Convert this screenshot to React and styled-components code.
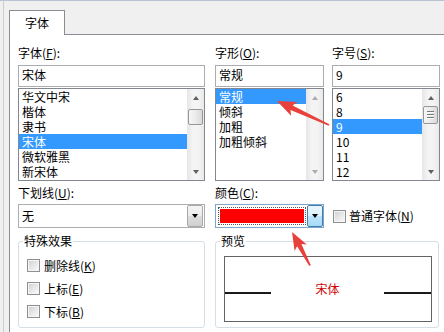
import React from 'react';
import styled, { createGlobalStyle } from 'styled-components';

const Global = createGlobalStyle`
  html, body { margin: 0; padding: 0; background: #f0f0f0; }
  body {
    font-family: "Noto Sans CJK SC", "Noto Sans", sans-serif;
    font-size: 12px;
    color: #000;
  }
  #root { width: 444px; height: 332px; overflow: hidden; }
`;

const Window = styled.div`
  position: relative;
  width: 444px;
  height: 332px;
  overflow: hidden;
  background: #f0f0f0;
  box-shadow: inset 0 1px 0 #b6c4d6;
  display: flex;
`;

const FrameEdge = styled.div`
  flex: none;
  width: 3px;
  border-right: 1px solid #cdcdcd;
`;

const Main = styled.div`
  flex: 1;
  min-width: 0;
  display: flex;
  flex-direction: column;
  padding: 10px 0 0 5px;
`;

const TabStrip = styled.div`
  height: 24px;
  flex: none;
  display: flex;
  align-items: flex-start;
`;

const Tab = styled.div`
  position: relative;
  z-index: 1;
  width: 56px;
  height: 25px;
  box-sizing: border-box;
  border: 1px solid #898c95;
  border-bottom: none;
  background: #fff;
  display: flex;
  align-items: center;
  justify-content: center;
  line-height: 16px;
`;

const Panel = styled.div`
  flex: 1;
  background: #fff;
  border-top: 1px solid #898c95;
  border-left: 1px solid #898c95;
  padding: 10px 0 0 8px;
  overflow: hidden;
`;

const Grid = styled.div`
  display: grid;
  grid-template-columns: 187px 10px 109px 8px 108px;
  row-gap: 4px;
  align-items: start;
`;

const Field = styled.div`
  grid-column: ${p => p.$col};
  display: flex;
  flex-direction: column;
  min-width: 0;
`;

const Label = styled.div`
  line-height: 16px;
  height: 16px;
  white-space: nowrap;
  margin-bottom: ${p => p.$gap}px;
`;

const TextBox = styled.div`
  height: 22px;
  box-sizing: border-box;
  border: 1px solid #abadb3;
  padding: 0 3px;
  line-height: 18px;
  background: #fff;
  margin-bottom: 1px;
`;

const ListFrame = styled.div`
  height: 93px;
  box-sizing: border-box;
  border: 1px solid #828790;
  display: flex;
  background: #fff;
`;

const ListItems = styled.div`
  flex: 1;
  min-width: 0;
  overflow: hidden;
`;

const ListItem = styled.div`
  height: 15px;
  line-height: 15px;
  padding-left: 3px;
  white-space: nowrap;
  background: ${p => (p.$selected ? '#3399ff' : 'transparent')};
  color: ${p => (p.$selected ? '#fff' : '#000')};
`;

const ScrollBar = styled.div`
  width: 17px;
  flex: none;
  display: flex;
  flex-direction: column;
  background: linear-gradient(to right, #e6e6e6 0%, #f4f4f4 35%, #f4f4f4 65%, #e9e9e9 100%);
`;

const ArrowBtn = styled.div`
  height: 17px;
  flex: none;
  display: flex;
  align-items: center;
  justify-content: center;
`;

const Tri = styled.span`
  width: 0;
  height: 0;
  border-left: 3.5px solid transparent;
  border-right: 3.5px solid transparent;
  ${p =>
    p.$dir === 'up'
      ? `border-bottom: 4px solid ${p.$muted ? '#ababab' : '#606060'};`
      : `border-top: 4px solid ${p.$muted ? '#ababab' : '#606060'};`}
`;

const Track = styled.div`
  flex: 1;
  display: flex;
  flex-direction: column;
`;

const Thumb = styled.div`
  margin: ${p => p.$top}px 1px 0;
  height: ${p => p.$h}px;
  box-sizing: border-box;
  border: 1px solid #979797;
  border-radius: 2px;
  background: linear-gradient(to right, #f6f6f6 0%, #ececec 45%, #dadada 100%);
  display: flex;
  flex-direction: column;
  align-items: center;
  justify-content: center;
  gap: 1px;
`;

const Grip = styled.span`
  width: 7px;
  height: 1px;
  background: #7a7a7a;
  box-shadow: 0 1px 0 #fdfdfd;
  margin-bottom: 1px;
`;

const DropBox = styled.div`
  height: 24px;
  box-sizing: border-box;
  border: 1px solid ${p => (p.$hover ? '#7ea4c8' : '#abadb3')};
  background: #fff;
  display: flex;
`;

const DropText = styled.div`
  flex: 1;
  display: flex;
  align-items: center;
  padding-left: 3px;
  line-height: 16px;
`;

const DropButton = styled.div`
  width: 16px;
  flex: none;
  box-sizing: border-box;
  margin-right: ${p => (p.$hover ? 0 : 1)}px;
  display: flex;
  align-items: center;
  justify-content: center;
  border: 1px solid ${p => (p.$hover ? '#3c7fb1' : '#a9a9a9')};
  border-radius: 2px;
  background: ${p =>
    p.$hover
      ? 'linear-gradient(#eaf6fd 0%, #d9f0fc 50%, #bee6fd 50%, #a7d9f5 100%)'
      : 'linear-gradient(#f4f4f4 0%, #ebebeb 50%, #dedede 50%, #cfcfcf 100%)'};
`;

const BlackTri = styled.span`
  width: 0;
  height: 0;
  border-left: 3.5px solid transparent;
  border-right: 3.5px solid transparent;
  border-top: 4px solid #000;
`;

const SwatchArea = styled.div`
  flex: 1;
  display: flex;
  padding: 2px 1px 2px 2px;
`;

const FocusRing = styled.div`
  flex: 1;
  display: flex;
  border: 1px dotted #555;
  padding: 1px;
`;

const Swatch = styled.div`
  flex: 1;
  background: ${p => p.$color};
`;

const CheckRow = styled.div`
  height: ${p => p.$h}px;
  display: flex;
  align-items: center;
  gap: ${p => p.$gap}px;
  padding-left: ${p => p.$indent}px;
  white-space: nowrap;
  line-height: 16px;
`;

const CheckBox = styled.span`
  flex: none;
  width: 13px;
  height: 13px;
  box-sizing: border-box;
  border: 1px solid #8e8f8f;
  background: linear-gradient(135deg, #cfcfcf 0%, #e9e9e9 55%, #fbfbfb 100%);
  box-shadow: inset 0 0 0 1px #f5f5f5;
`;

const Group = styled.fieldset`
  grid-column: ${p => p.$col};
  margin: 1px ${p => p.$mr}px 0 0;
  padding: 0;
  min-width: 0;
  border: 1px solid #d5dfe5;
  border-radius: 3px;
`;

const Legend = styled.legend`
  margin-left: 4px;
  padding: 0 1px;
  line-height: 16px;
  font-size: 12px;
`;

const GroupBody = styled.div`
  padding: ${p => p.$pad};
`;

const PreviewBox = styled.div`
  height: 66px;
  box-sizing: border-box;
  border: 1px solid #646464;
  background: #fff;
  display: flex;
  align-items: center;
  justify-content: space-between;
`;

const PreviewLine = styled.div`
  width: ${p => p.$w}px;
  height: 2px;
  margin-top: 7px;
  background: #1a1a1a;
`;

const PreviewText = styled.span`
  color: #d00000;
  line-height: 16px;
`;

const Overlay = styled.svg`
  position: absolute;
  left: 0;
  top: 0;
  width: 444px;
  height: 332px;
  pointer-events: none;
`;

function ListBox({ items, selected, thumb, disabled }) {
  return (
    <ListFrame>
      <ListItems>
        {items.map((t, i) => (
          <ListItem key={t} $selected={i === selected}>
            {t}
          </ListItem>
        ))}
      </ListItems>
      <ScrollBar>
        <ArrowBtn>
          <Tri $dir="up" $muted={disabled} />
        </ArrowBtn>
        <Track>
          {thumb && (
            <Thumb $top={thumb.top} $h={thumb.h}>
              {thumb.grip && (
                <>
                  <Grip />
                  <Grip />
                  <Grip />
                </>
              )}
            </Thumb>
          )}
        </Track>
        <ArrowBtn>
          <Tri $dir="down" $muted={disabled} />
        </ArrowBtn>
      </ScrollBar>
    </ListFrame>
  );
}

export default function App() {
  return (
    <>
      <Global />
      <Window>
        <FrameEdge />
        <Main>
          <TabStrip>
            <Tab>字体</Tab>
          </TabStrip>
          <Panel>
            <Grid>
              <Field $col={1}>
                <Label $gap={4}>
                  字体(<u>F</u>):
                </Label>
                <TextBox>宋体</TextBox>
                <ListBox
                  items={['华文中宋', '楷体', '隶书', '宋体', '微软雅黑', '新宋体']}
                  selected={3}
                  thumb={{ top: 3, h: 16 }}
                />
              </Field>
              <Field $col={3}>
                <Label $gap={4}>
                  字形(<u>O</u>):
                </Label>
                <TextBox>常规</TextBox>
                <ListBox items={['常规', '倾斜', '加粗', '加粗倾斜']} selected={0} disabled />
              </Field>
              <Field $col={5}>
                <Label $gap={4}>
                  字号(<u>S</u>):
                </Label>
                <TextBox>9</TextBox>
                <ListBox
                  items={['6', '8', '9', '10', '11', '12']}
                  selected={2}
                  thumb={{ top: 0, h: 18, grip: true }}
                />
              </Field>

              <Field $col={1}>
                <Label $gap={3}>
                  下划线(<u>U</u>):
                </Label>
                <DropBox>
                  <DropText>无</DropText>
                  <DropButton>
                    <BlackTri />
                  </DropButton>
                </DropBox>
              </Field>
              <Field $col={3}>
                <Label $gap={3}>
                  颜色(<u>C</u>):
                </Label>
                <DropBox $hover>
                  <SwatchArea>
                    <FocusRing>
                      <Swatch $color="#ff0000" />
                    </FocusRing>
                  </SwatchArea>
                  <DropButton $hover>
                    <BlackTri />
                  </DropButton>
                </DropBox>
              </Field>
              <Field $col={5}>
                <Label $gap={3} />
                <CheckRow $h={24} $gap={3} $indent={1}>
                  <CheckBox />
                  <span>
                    普通字体(<u>N</u>)
                  </span>
                </CheckRow>
              </Field>

              <Group $col={1} $mr={0}>
                <Legend>特殊效果</Legend>
                <GroupBody $pad="5px 0 4px 0">
                  <CheckRow $h={23} $gap={4} $indent={8}>
                    <CheckBox />
                    <span>
                      删除线(<u>K</u>)
                    </span>
                  </CheckRow>
                  <CheckRow $h={23} $gap={4} $indent={8}>
                    <CheckBox />
                    <span>
                      上标(<u>E</u>)
                    </span>
                  </CheckRow>
                  <CheckRow $h={23} $gap={4} $indent={8}>
                    <CheckBox />
                    <span>
                      下标(<u>B</u>)
                    </span>
                  </CheckRow>
                </GroupBody>
              </Group>
              <Group $col="3 / 6" $mr={1}>
                <Legend>预览</Legend>
                <GroupBody $pad="7px 6px 5px 8px">
                  <PreviewBox>
                    <PreviewLine $w={46} />
                    <PreviewText>宋体</PreviewText>
                    <PreviewLine $w={47} />
                  </PreviewBox>
                </GroupBody>
              </Group>
            </Grid>
          </Panel>
        </Main>
        <Overlay viewBox="0 0 444 332">
          <polygon
            points="277,101 297.4,102.1 292.6,105.4 329.3,124.3 328.7,125.7 290.5,110 291.1,115.8"
            fill="#e8403b"
          />
          <polygon
            points="292,232 306.8,244.4 301.4,243.9 310.7,265.1 309.3,265.9 297.1,246.3 294.6,251.1"
            fill="#e8403b"
          />
        </Overlay>
      </Window>
    </>
  );
}
